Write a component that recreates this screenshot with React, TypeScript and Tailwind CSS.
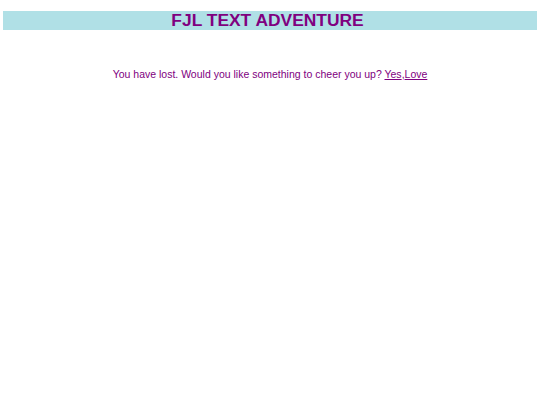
export default function App() {
  return (
    <div className="min-h-screen bg-white px-[3px] pt-[11px]" style={{ fontFamily: '"Liberation Sans", Arial, sans-serif' }}>
      <h1 className="h-[19px] bg-[#b0e0e6] pr-[5px] text-center text-[17.4px] font-bold leading-[19px] text-[#800080]">
        FJL TEXT ADVENTURE
      </h1>
      <p className="mt-[37px] text-center text-[10.5px] leading-[14px] text-[#800080]">
        You have lost. Would you like something to cheer you up?{' '}
        <a href="#" className="underline">Yes</a>,<a href="#" className="underline">Love</a>
      </p>
    </div>
  );
}
